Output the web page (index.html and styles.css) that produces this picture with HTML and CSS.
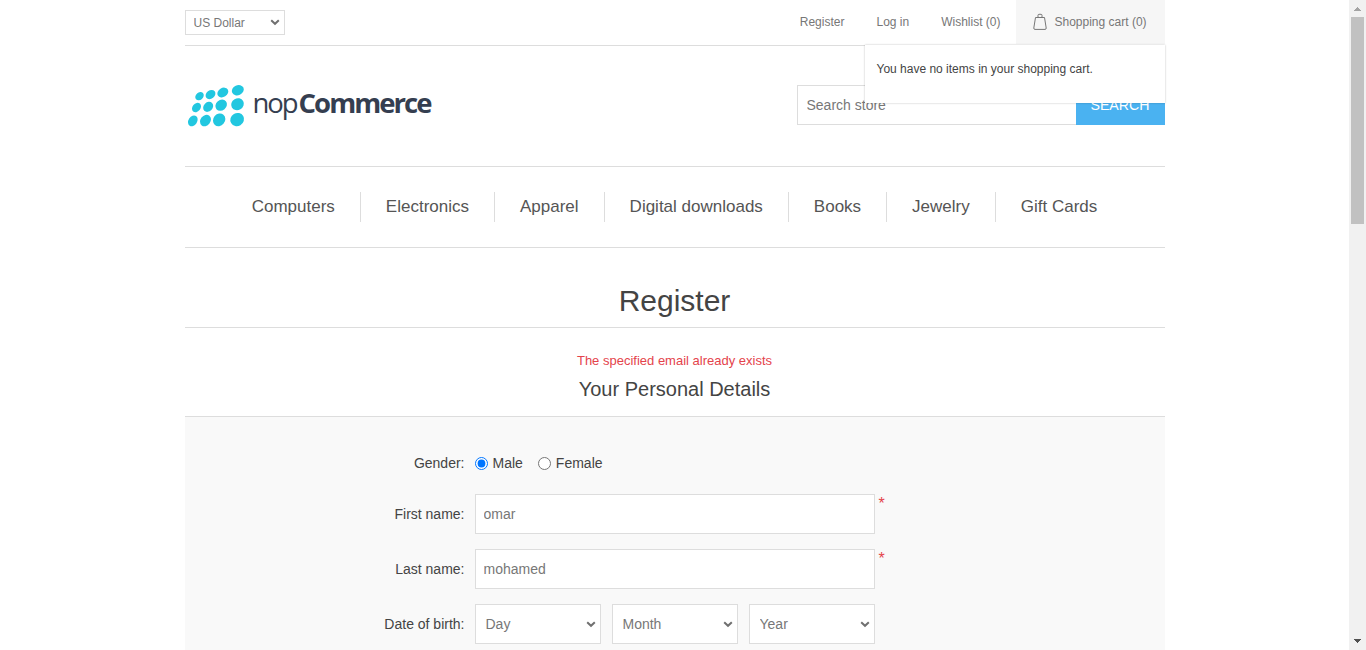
FILE: index.html
```html
<!DOCTYPE html>
<html lang="en">
<head>
<meta charset="utf-8">
<title>nopCommerce demo store. Register</title>
<link rel="stylesheet" href="styles.css">
</head>
<body>
<div class="viewport">
  <div class="page">
    <div class="wrapper">
      <header>
        <div class="header-upper">
          <select class="currency"><option>US Dollar</option></select>
          <nav class="header-links">
            <a class="link">Register</a>
            <a class="link">Log in</a>
            <a class="link">Wishlist (0)</a>
            <div class="cart">
              <svg class="bag" viewBox="0 0 14 17" width="14" height="17">
                <path d="M2.500 4.500h9l1.700 10.500q.1 1.400-1.200 1.400H2q-1.300 0-1.200-1.400zM5 4.500V2.300q0-1 1-1h2q1 0 1 1v2.200"/>
              </svg>
              <a>Shopping cart (0)</a>
              <div class="flyout">You have no items in your shopping cart.</div>
            </div>
          </nav>
        </div>
        <div class="header-lower">
          <svg class="logo" viewBox="0 0 270 60" width="270" height="60">
            <g class="dots" transform="translate(.5 .2) scale(.33333)">
              <ellipse cx="42" cy="48" rx="14" ry="11" transform="rotate(-42 42 48)"/>
              <ellipse cx="75" cy="43" rx="16" ry="12.500" transform="rotate(-38 75 43)"/>
              <ellipse cx="112" cy="37" rx="17.500" ry="13.500" transform="rotate(-32 112 37)"/>
              <ellipse cx="157" cy="30" rx="18.500" ry="15" transform="rotate(-25 157 30)"/>
              <ellipse cx="33" cy="82" rx="15.500" ry="12" transform="rotate(-50 33 82)"/>
              <ellipse cx="68" cy="80" rx="16.500" ry="13.500" transform="rotate(-45 68 80)"/>
              <ellipse cx="107" cy="75" rx="18.500" ry="15.500" transform="rotate(-40 107 75)"/>
              <ellipse cx="156" cy="72" rx="19.500" ry="17.500" transform="rotate(-30 156 72)"/>
              <ellipse cx="22" cy="122" rx="17.500" ry="13" transform="rotate(-57 22 122)"/>
              <ellipse cx="60" cy="121" rx="18.500" ry="15" transform="rotate(-52 60 121)"/>
              <ellipse cx="101" cy="119" rx="20" ry="17.500" transform="rotate(-50 101 119)"/>
              <ellipse cx="155" cy="118" rx="21" ry="19.500" transform="rotate(-30 155 118)"/>
            </g>
            <text class="logo-nop" x="67.500" y="32.500" textLength="46" lengthAdjust="spacing">nop</text>
            <text class="logo-commerce" x="113.500" y="32.500" textLength="134" lengthAdjust="spacing">Commerce</text>
          </svg>
          <form class="search">
            <input class="search-text" type="text" placeholder="Search store">
            <button class="search-button" type="button">Search</button>
          </form>
        </div>
      </header>
      <nav class="menu">
        <a>Computers</a><a>Electronics</a><a>Apparel</a><a>Digital downloads</a><a>Books</a><a>Jewelry</a><a>Gift Cards</a>
      </nav>
      <main>
        <h1 class="page-title">Register</h1>
        <div class="error">The specified email already exists</div>
        <h2 class="section-title">Your Personal Details</h2>
        <div class="form-fields">
          <div class="row gender-row">
            <label class="label">Gender:</label>
            <div class="gender">
              <label class="option"><input type="radio" name="gender" checked>Male</label>
              <label class="option"><input type="radio" name="gender">Female</label>
            </div>
          </div>
          <div class="row">
            <label class="label">First name:</label>
            <input class="field" type="text" value="omar">
            <span class="required">*</span>
          </div>
          <div class="row">
            <label class="label">Last name:</label>
            <input class="field" type="text" value="mohamed">
            <span class="required">*</span>
          </div>
          <div class="row">
            <label class="label">Date of birth:</label>
            <div class="birth">
              <select><option>Day</option></select>
              <select><option>Month</option></select>
              <select><option>Year</option></select>
            </div>
          </div>
        </div>
      </main>
    </div>
  </div>
  <div class="scrollbar">
    <svg class="arrow up" viewBox="0 0 17 17" width="17" height="17"><path d="M5 11h7v-1h-1v-1h-1v-1h-1v-1h-1v1h-1v1h-1v1h-1z"/></svg>
    <div class="thumb"></div>
    <svg class="arrow down" viewBox="0 0 17 17" width="17" height="17"><path d="M5 6h7v1h-1v1h-1v1h-1v1h-1v-1h-1v-1h-1v-1h-1z"/></svg>
  </div>
</div>
</body>
</html>
```

FILE: styles.css
```css
* { box-sizing: border-box; margin: 0; padding: 0; }
body {
  height: 650px;
  overflow: hidden;
  background: #fff;
  color: #444;
  font: 14px "Liberation Sans", Arial, sans-serif;
}
input, select, button { font: inherit; color: #777; border-radius: 0; outline: 0; }
select {
  appearance: none;
  border: 1px solid #ddd;
  background: #fff url("data:image/svg+xml,%3Csvg xmlns='http://www.w3.org/2000/svg' width='10' height='7'%3E%3Cpath d='M1.200 1.200 5 4.800 8.800 1.200' fill='none' stroke='%23707070' stroke-width='2'/%3E%3C/svg%3E") no-repeat right 4px center;
}
.viewport { display: flex; height: 650px; }
.page { flex: 1; height: 650px; overflow: hidden; }
.wrapper { width: 980px; margin: 0 auto; }

.header-upper {
  display: flex;
  justify-content: space-between;
  height: 46px;
  border-bottom: 1px solid #ddd;
  font-size: 12px;
  color: #777;
}
.currency {
  width: 100px;
  height: 25px;
  margin-top: 10px;
  padding: 0 8px;
}
.header-links { display: flex; line-height: 44px; }
.link { margin-right: 32px; }
.link:nth-child(3) { margin-right: 15px; }
.cart {
  position: relative;
  display: flex;
  width: 149px;
  height: 44px;
  padding-left: 17.5px;
  background: #f6f6f6;
}
.bag { margin: 12.5px 7.5px 0 0; fill: none; stroke: #777; stroke-width: 1; }
.flyout {
  position: absolute;
  z-index: 2;
  top: 45px;
  right: 0;
  width: 300px;
  height: 58px;
  padding: 16px 12px;
  background: #fff;
  box-shadow: 0 0 2px rgba(0, 0, 0, .25);
  color: #444;
  line-height: 16px;
}
.header-lower {
  display: flex;
  justify-content: space-between;
  height: 120px;
  padding-top: 34px;
}
.dots { fill: #22c7e0; }
.logo-nop, .logo-commerce { font-family: "Open Sans", "Noto Sans", sans-serif; font-size: 27.5px; fill: #353e50; }
.logo-commerce { font-weight: 700; }
.search { display: flex; padding-top: 5px; }
.search-text { width: 280px; height: 40px; padding: 0 9px; border: 1px solid #ddd; }
.search-text::placeholder { color: #777; }
.search-button {
  width: 89px;
  height: 40px;
  margin-left: -1px;
  border: 0;
  background: #4ab2f1;
  color: #fff;
  font-size: 14.2px;
  text-transform: uppercase;
}

.menu {
  display: flex;
  justify-content: center;
  height: 82px;
  padding-top: 25px;
  border-top: 1px solid #ddd;
  border-bottom: 1px solid #ddd;
}
.menu a { height: 30px; padding: 0 25px; font-size: 17px; line-height: 30px; color: #555; }
.menu a + a { border-left: 1px solid #ddd; }

.page-title {
  height: 80px;
  padding-top: 35px;
  border-bottom: 1px solid #ddd;
  font-size: 30px;
  font-weight: 400;
  line-height: 36px;
  text-align: center;
}
.error { padding-top: 25px; font-size: 13px; line-height: 16px; text-align: center; color: #e4434b; }
.section-title { height: 47px; padding-top: 8px; font-size: 20px; font-weight: 400; line-height: 24px; text-align: center; }
.form-fields { height: 300px; padding-top: 36px; border-top: 1px solid #ddd; background: #f9f9f9; }
.row { display: flex; height: 40px; margin-bottom: 15px; }
.gender-row { height: 20px; margin-bottom: 21px; }
.label { width: 290px; padding-right: 10px; line-height: 40px; text-align: right; }
.gender-row .label { line-height: 20px; }
.gender { display: flex; gap: 15px; line-height: 20px; }
.option { display: flex; align-items: center; }
.option input { width: 13px; height: 13px; margin-right: 5px; }
.field { width: 400px; height: 40px; padding: 0 8px; border: 1px solid #ddd; background: #fff; }
.required { margin-left: 4px; font-size: 16px; line-height: 20px; color: #e4434b; }
.birth { display: flex; gap: 11px; }
.birth select { width: 126px; height: 40px; padding: 0 10px; }

.scrollbar {
  display: flex;
  flex-direction: column;
  width: 17px;
  background: #f1f1f1;
}
.arrow { display: block; }
.up { fill: #a3a3a3; }
.down { margin-top: auto; fill: #505050; }
.thumb { width: 13px; height: 207px; margin-left: 2px; background: #c1c1c1; }
```
